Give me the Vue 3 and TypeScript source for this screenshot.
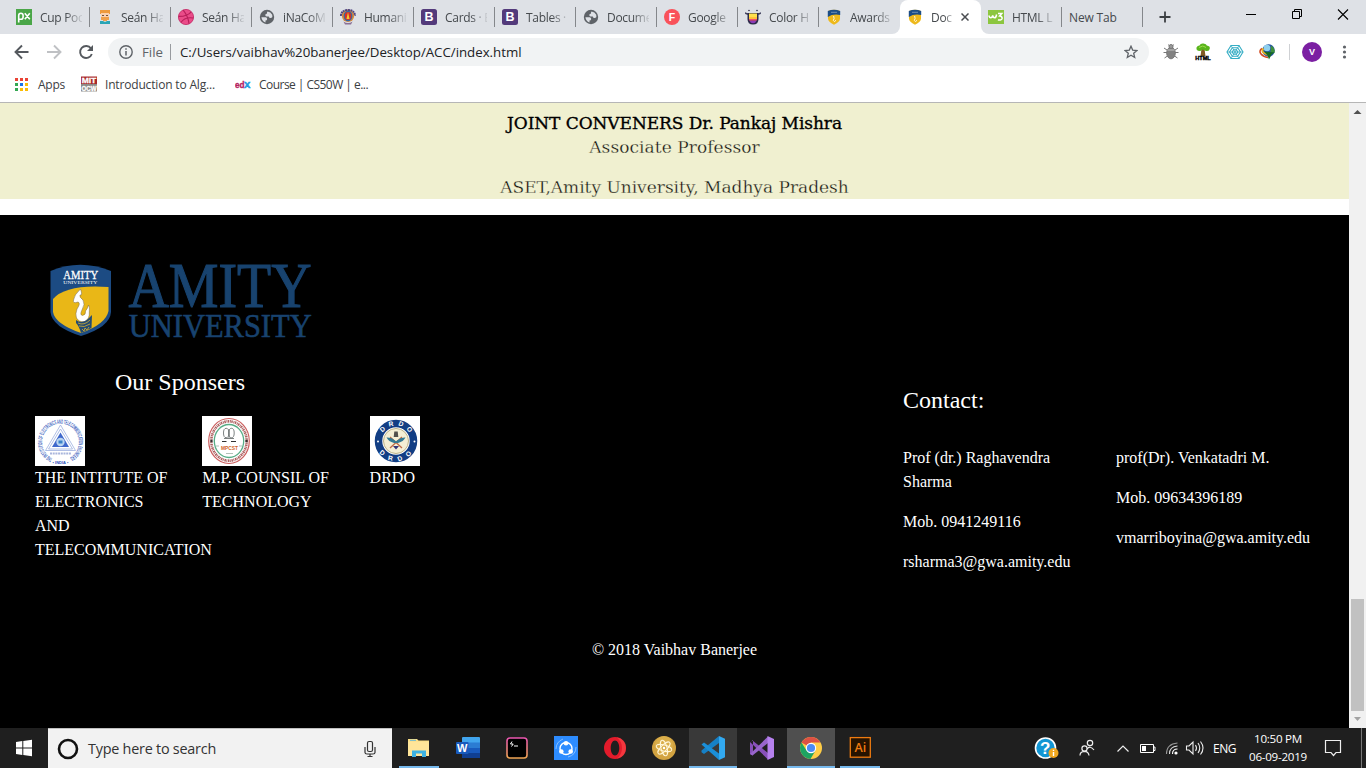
<script setup lang="ts">
interface Tab {
  icon: string
  label: string
  active?: boolean
}

const tabs: Tab[] = [
  { icon: 'px', label: 'Cup Poc' },
  { icon: 'person', label: 'Seán Ha' },
  { icon: 'dribbble', label: 'Seán Ha' },
  { icon: 'globe', label: 'iNaCoM' },
  { icon: 'crest', label: 'Humani' },
  { icon: 'boot', label: 'Cards · E' },
  { icon: 'boot', label: 'Tables ·' },
  { icon: 'globe', label: 'Docume' },
  { icon: 'fonts', label: 'Google' },
  { icon: 'cup', label: 'Color H' },
  { icon: 'shield', label: 'Awards' },
  { icon: 'shield', label: 'Doc', active: true },
  { icon: 'w3', label: 'HTML L' },
  { icon: '', label: 'New Tab' },
]

const appDots = ['#ea4335', '#ea4335', '#ea4335', '#34a853', '#1a73e8', '#fbbc04', '#34a853', '#fbbc04', '#fbbc04']
const apps = ['explorer', 'word', 'terminal', 'share', 'opera', 'atom', 'vscode', 'vs', 'chrome', 'ai']
const running = ['explorer', 'ai']
const raised = ['vscode', 'chrome']

const sponsors = [
  { id: 'iete', name: 'THE INTITUTE OF ELECTRONICS AND TELECOMMUNICATION' },
  { id: 'mpcst', name: 'M.P. COUNSIL OF TECHNOLOGY' },
  { id: 'drdo', name: 'DRDO' },
]

const contacts = [
  ['Prof (dr.) Raghavendra Sharma', 'Mob. 0941249116', 'rsharma3@gwa.amity.edu'],
  ['prof(Dr). Venkatadri M.', 'Mob. 09634396189', 'vmarriboyina@gwa.amity.edu'],
]

// Tracks a single line of text so that it spans the given number of pixels.
const vFit = {
  mounted(el: HTMLElement, binding: { value: number }) {
    const natural = el.getBoundingClientRect().width
    const count = (el.textContent || '').trim().length
    el.style.letterSpacing = `${(binding.value - natural) / count}px`
  },
}
</script>

<template>
  <div class="screen">
    <div class="tabstrip">
      <div class="tabs">
        <div v-for="(t, i) in tabs" :key="i" class="tab" :class="{ active: t.active, before: i === 10, after: i === 12 }">
          <svg v-if="t.icon" class="fav" viewBox="0 0 16 16">
            <template v-if="t.icon === 'px'">
              <rect width="16" height="16" fill="#4aa648" />
              <path d="M2.700 13.500V6.600Q2.700 4.300 4.900 4.300T7.100 6.600V7.900Q7.100 10.200 4.900 10.200H3M8.800 4.300l5 6M13.800 4.300l-5 6" fill="none" stroke="#fff" stroke-width="1.600" />
            </template>
            <template v-else-if="t.icon === 'person'">
              <rect x="3" y="1" width="10" height="4" fill="#ee9a3d" />
              <rect x="4" y="4" width="8" height="7" fill="#fbd0ae" />
              <rect x="5" y="6" width="2" height="1" fill="#6d5140" />
              <rect x="9" y="6" width="2" height="1" fill="#6d5140" />
              <path d="M4 8h8v3H10v1H6V11H4z" fill="#f0a04b" />
              <path d="M3 12h3l2 1 2-1h3v3H3z" fill="#2aa5b5" />
            </template>
            <template v-else-if="t.icon === 'dribbble'">
              <circle cx="8" cy="8" r="7.600" fill="#ea4c89" stroke="#c32361" stroke-width=".8" />
              <path d="M5.200 1.200Q10 7 11 14.600M.6 7.400Q9 7.600 13.200 2.800M3 13.600Q6.500 7.500 15.400 9" fill="none" stroke="#b81f5b" stroke-width="1.100" />
            </template>
            <template v-else-if="t.icon === 'globe'">
              <circle cx="8" cy="8" r="7.200" fill="#5f6368" />
              <path d="M2.400 8.200h4.200q1.600.2 1.600 1.800-.1 1.500-1.700 1.600v1.900Q2.900 12.200 2.400 8.200zM8.600 2.600q3.200.4 4.600 3.200L13.400 8q-1.200 1.500-2.600.9-1-.6-1-1.400H7.600Q6.200 7.200 6.300 6t1.600-1.300q-.1-1.600.7-2.100z" fill="#dee1e6" />
            </template>
            <template v-else-if="t.icon === 'crest'">
              <circle cx="8" cy="6.800" r="6.200" fill="#d98b3b" />
              <path d="M.8 7Q1.500 1 8 1t7.200 6" fill="none" stroke="#4d4380" stroke-width="2" stroke-dasharray="2 .5" />
              <ellipse cx="8" cy="7" rx="3.800" ry="4.600" fill="#d5302b" stroke="#3168a7" stroke-width="1.200" />
              <path d="M8 3l1.500 7h-3z" fill="#f3c733" />
              <path d="M3.500 12.500q4.500 3 9 0l-1.500 3h-6z" fill="#8a7096" />
            </template>
            <template v-else-if="t.icon === 'boot'">
              <rect width="16" height="16" rx="2.500" fill="#533a7b" />
              <text x="8" y="12.300" text-anchor="middle" class="glyph" font-size="12.500" fill="#fff">B</text>
            </template>
            <template v-else-if="t.icon === 'fonts'">
              <circle cx="8" cy="8" r="8" fill="#f9525a" />
              <text x="8" y="11.800" text-anchor="middle" class="glyph" font-size="10.500" fill="#fff">F</text>
            </template>
            <template v-else-if="t.icon === 'cup'">
              <path d="M2.500 4h11v6q0 5.500-5.500 5.500T2.500 10z" fill="#2c2a4a" />
              <rect x="4" y="4.500" width="8" height="4" fill="#ffe14d" />
              <rect x="4" y="8" width="8" height="2" fill="#ffc23d" />
              <path d="M4 10h8l-.4 1.700H4.400z" fill="#f5516c" />
              <path d="M4.500 11.700h7Q10.500 14.300 8 14.300T4.500 11.700z" fill="#8c3bb8" />
              <path d="M.5 3.500q0 1.500 2.500 1.500M15.500 3.500q0 1.500-2.500 1.500" fill="none" stroke="#2c2a4a" stroke-width="1.300" />
              <circle cx="4" cy="1.500" r=".8" fill="#2c2a4a" /><circle cx="12" cy="1.500" r=".8" fill="#2c2a4a" />
            </template>
            <template v-else-if="t.icon === 'shield'">
              <path d="M2 2q6-2.500 12 0v7.500Q14 13 8 15.700 2 13 2 9.500z" fill="#eeb91b" />
              <path d="M1.800 2q6.200-2.700 12.400 0v4Q7 4.500 1.800 8z" fill="#1c4d86" />
              <path d="M5 3.300h6" stroke="#7f9dbf" stroke-width=".8" />
              <path d="M7.600 7l.5 2.500-.8 2 1.400 1.200 1-1.500" fill="none" stroke="#fff8db" />
            </template>
            <template v-else-if="t.icon === 'w3'">
              <rect y="1" width="16" height="14" fill="#8cc63f" />
              <path d="M.8 6.500q.6 2.300 2 2.300T4.700 6.500q.5 2.300 1.900 2.300T8.600 5.500M10 4.500h3.800L11.600 7q2.700.3 2.500 2.400-.4 2.200-4.200 1.500" fill="none" stroke="#fff" stroke-width="1.500" />
            </template>
          </svg>
          <span class="label">{{ t.label }}</span>
          <svg v-if="t.active" class="tabx" viewBox="0 0 8 8"><path d="M.5.5l7 7M7.500.5l-7 7" stroke="#4a4d51" stroke-width="1.500" /></svg>
        </div>
      </div>
      <svg class="plus" viewBox="0 0 12 12"><path d="M6 .5v11M.5 6h11" stroke="#3c4043" stroke-width="1.800" /></svg>
      <svg class="winbtns" viewBox="0 0 138 34">
        <path d="M18 14.500h10" stroke="#000" />
        <path d="M64.500 11.500h7v7h-7zM66.500 11.500v-2h7v7h-2" fill="none" stroke="#000" />
        <path d="M110 9.500l10 10M120 9.500l-10 10" stroke="#000" stroke-width="1.100" />
      </svg>
    </div>

    <div class="toolbar">
      <svg class="nav" viewBox="0 0 100 36">
        <path d="M28.500 18H16M22 11.500L15.500 18l6.500 6.500" fill="none" stroke="#55595e" stroke-width="1.900" />
        <path d="M47 18h12.500M54 11.500L60.500 18 54 24.500" fill="none" stroke="#bfc1c4" stroke-width="1.900" />
        <path d="M91 14.500A6 6 0 1 0 91.800 20" fill="none" stroke="#55595e" stroke-width="1.900" />
        <path d="M93 11v6h-6z" fill="#55595e" />
      </svg>
      <div class="omnibox">
        <svg class="info" viewBox="0 0 14 14"><circle cx="7" cy="7" r="6.200" fill="none" stroke="#5f6368" stroke-width="1.400" /><path d="M7 6v4.500M7 3.300v1.500" stroke="#5f6368" stroke-width="1.500" /></svg>
        <span class="slot file"><span v-fit="21">File</span></span>
        <i class="bar"></i>
        <span class="url"><span v-fit="341.500">C:/Users/vaibhav%20banerjee/Desktop/ACC/index.html</span></span>
        <svg class="star" viewBox="0 0 14 14"><path d="M7 1.200l1.700 3.900 4.200.4-3.200 2.800 1 4.200L7 10.300l-3.700 2.200 1-4.200L1.100 5.500l4.200-.4z" fill="none" stroke="#5f6368" stroke-width="1.300" /></svg>
      </div>
      <svg class="exts" viewBox="0 0 217 36">
        <g stroke="#777" fill="none">
          <path d="M15 14l3 2M29 14l-3 2M14.500 18.500H18M29.500 18.500H26M15.500 24l3-2M28.500 24l-3-2M19.500 10.500L21 13M24.500 10.500L23 13" />
          <ellipse cx="22" cy="19" rx="4.300" ry="5.800" fill="#828282" />
          <circle cx="22" cy="12.500" r="2" fill="#999" />
          <path d="M18.500 16h7" stroke="#c4c4c4" />
        </g>
        <path d="M52.500 15h3l1 7h-5z" fill="#805a22" />
        <path d="M50 17q-3-.5-2.500-3.500 1-2 3-2 1-2.500 4-2t3.300 2q3.500.5 3 3-.5 3-3.500 2.500-1.500-.5-3.500-1.500-1.500 1.500-3.800 1.500z" fill="#59b51c" />
        <path d="M50 13.500q4-3 7 0" stroke="#a0dc49" fill="none" />
        <text x="54" y="25.500" text-anchor="middle" class="glyph" font-size="5.500" textLength="15.500" lengthAdjust="spacingAndGlyphs" stroke="#000" stroke-width=".4">HTML</text>
        <g fill="none" stroke="#35adc4" stroke-width="1.100">
          <path d="M82 11.500h8l4 6.500-4 6.500h-8l-4-6.500z" /><path d="M83.300 13.700h5.400l2.700 4.300-2.700 4.300h-5.400L80.600 18z" /><path d="M84.600 15.800h2.800l1.400 2.200-1.400 2.200h-2.800L83.200 18z" />
          <path d="M78 18h16M82 11.500l8 13M90 11.500l-8 13" stroke-width=".8" />
        </g>
        <circle cx="119.500" cy="16.500" r="6.200" fill="#2858a6" />
        <circle cx="118" cy="14" r="3.300" fill="#8fd0ee" />
        <path d="M122 11.500q4.500 2.500 3.500 7.500l-4-1z" fill="#3f8f3a" />
        <path d="M113 14.500q-3.500 2.500-1 5.500t7 3.500" stroke="#d34b21" stroke-width="1.600" fill="none" />
        <path d="M114.500 14.500q-2.500 2.500.5 4.500t6 2" fill="none" stroke="#e7b523" stroke-width="1.800" />
        <path d="M115 17.500l10.500 1-3 2-2.500 5-1.500-4z" fill="#176b22" />
        <path d="M140.500 10v16" stroke="#cfd1d4" />
        <circle cx="163" cy="18" r="10" fill="#7b1fa2" />
        <text x="163" y="21.200" text-anchor="middle" class="glyph" font-size="9" fill="#fff">V</text>
        <g fill="#5f6368"><circle cx="195.500" cy="13" r="1.600" /><circle cx="195.500" cy="18" r="1.600" /><circle cx="195.500" cy="23" r="1.600" /></g>
      </svg>
    </div>

    <div class="bookmarks">
      <div class="dots"><i v-for="(c, i) in appDots" :key="i" :style="{ background: c }"></i></div>
      <span class="slot b1"><span v-fit="27">Apps</span></span>
      <svg class="fav" viewBox="0 0 16 16">
        <rect y="0.500" width="16" height="7.500" fill="#a8292b" /><rect y="8" width="16" height="7.500" fill="#8d8b88" />
        <text x="8" y="7.200" text-anchor="middle" class="glyph" font-size="7.500" textLength="14.500" lengthAdjust="spacingAndGlyphs" fill="#fff" stroke="#fff" stroke-width=".3">MIT</text>
        <text x="8" y="14.500" text-anchor="middle" class="glyph" font-size="7.500" textLength="15" lengthAdjust="spacingAndGlyphs" fill="#fff" stroke="#fff" stroke-width=".3">OCW</text>
      </svg>
      <span class="slot b2"><span v-fit="110">Introduction to Alg...</span></span>
      <svg class="fav" viewBox="0 0 16 16">
        <text x="0" y="11.500" class="glyph" font-size="9.500" fill="#b5215e" textLength="9.500" lengthAdjust="spacingAndGlyphs" stroke="#b5215e" stroke-width=".4">ed</text>
        <text x="9" y="11.500" class="glyph" font-size="9.500" fill="#1c9be0" stroke="#1c9be0" stroke-width=".5">X</text>
      </svg>
      <span class="slot b3"><span v-fit="109">Course | CS50W | e...</span></span>
    </div>

    <div class="viewport">
      <main class="page">
        <section class="conveners">
          <p><b v-fit="335">JOINT CONVENERS Dr. Pankaj Mishra</b></p>
          <p class="role"><span v-fit="170.500">Associate Professor</span></p>
          <p><span v-fit="348.500">ASET,Amity University, Madhya Pradesh</span></p>
        </section>
        <footer class="footer">
          <div class="columns">
            <div class="left">
              <svg class="amity" viewBox="0 0 300 100">
                <path d="M20.500 21Q50 8.500 81 21V62Q80 77 51 86 22 77 20.500 62z" fill="#1c4b83" />
                <path d="M23 49Q36 34 78.500 37V61Q76 74 51 83 25 74 23 62z" fill="#e9b717" />
                <text x="50.700" y="29" text-anchor="middle" class="serif" font-size="13.500" fill="#fff" stroke="#fff" stroke-width=".3" textLength="35" lengthAdjust="spacingAndGlyphs">AMITY</text>
                <text x="50.300" y="33.800" text-anchor="middle" class="serif" font-size="5" fill="#fff" textLength="34" lengthAdjust="spacingAndGlyphs">UNIVERSITY</text>
                <path d="M50.500 39Q44 45 43.500 50 42.500 54 48 52 51 53 47 59 45 64 46.500 68 49 72.500 54.500 71.500 60 69 59.300 62 60 57 58.500 55 58 58 55.500 61 56 65 52.500 65.500 49.500 65 52 60 55.500 54 53 50 49 47 50 45 53 46 50.500 39z" fill="#fff" stroke="#746442" stroke-width=".5" />
                <path d="M46 70q7 5 14-3l2-2-.5 13-10.500 5q-2-7-5-10z" fill="#244b72" />
                <path d="M48 73q6 3 12-3M49 76q5 2 11-2M52 79l2 2 1-3 2 2 2-3" fill="none" stroke="#d5af31" stroke-width=".8" />
                <text x="98.500" y="57.300" class="serif" font-size="62.500" fill="#18436f" stroke="#18436f" stroke-width="1.100" textLength="183" lengthAdjust="spacingAndGlyphs">AMITY</text>
                <text x="98.700" y="86.500" class="serif" font-size="33" fill="#18436f" stroke="#18436f" stroke-width=".6" textLength="183" lengthAdjust="spacingAndGlyphs">UNIVERSITY</text>
              </svg>
              <h4 class="title">Our Sponsers</h4>
              <div class="sponsors">
                <div v-for="s in sponsors" :key="s.id" class="sponsor">
                  <svg class="seal" viewBox="0 0 50 50">
                    <rect width="50" height="50" fill="#fff" />
                    <template v-if="s.id === 'iete'">
                      <path id="ring-iete" d="M17.500 42.500A18.300 18.300 0 1 1 33.500 42.500" fill="none" />
                      <text class="ring" font-size="6.200" fill="#3c63be"><textPath href="#ring-iete" textLength="96" lengthAdjust="spacingAndGlyphs">THE INSTITUTION OF ELECTRONICS AND TELECOMMUNICATION ENGINEERS</textPath></text>
                      <text x="25.500" y="48" text-anchor="middle" class="ring" font-size="4" fill="#2650b8">• INDIA •</text>
                      <path d="M25.500 9L40.500 34.500H10.500zM25.500 13L37.500 33H13.500z" fill="none" stroke="#9db0df" stroke-width=".8" />
                      <path d="M25.500 16.500l8.500 14.500H17z" fill="#3f68cc" />
                      <circle cx="25.500" cy="26" r="4.200" fill="#b9d5f1" /><path d="M23.500 24.500h4v3h-4z" fill="#3b83c8" />
                      <path d="M15 37.500h21" stroke="#a9b6dc" stroke-width="1.800" stroke-dasharray="2 .7" />
                    </template>
                    <template v-else-if="s.id === 'mpcst'">
                      <ellipse cx="27" cy="25" rx="20.300" ry="22.500" fill="none" stroke="#cb5d5d" stroke-width="1.200" />
                      <ellipse cx="27" cy="25" rx="17.700" ry="19.700" fill="none" stroke="#ad6161" stroke-width="2.600" stroke-dasharray="1.500 .7 .9 .5" />
                      <ellipse cx="27" cy="25" rx="14.700" ry="16.500" fill="none" stroke="#58ad87" stroke-width="1.300" />
                      <g fill="none" stroke="#6e7474" stroke-width=".9"><ellipse cx="24.200" cy="17" rx="2.700" ry="4.700" /><ellipse cx="29.500" cy="17" rx="2.700" ry="4.700" /><path d="M27 13v9M22 22.500h10" /></g>
                      <path d="M20 25.500h4.500M29 25.500h5" stroke="#333" />
                      <text x="27.500" y="33.500" text-anchor="middle" class="ring" font-size="5.800" fill="#d16327" textLength="17" lengthAdjust="spacingAndGlyphs">MPCST</text>
                      <path d="M14 30h3M37 30h3M24 37.500h7" stroke="#91a69a" stroke-width=".7" />
                      <path d="M8.500 25h2M43.500 25h2" stroke="#333" stroke-width="2.500" />
                    </template>
                    <template v-else>
                      <circle cx="26" cy="25" r="17.500" fill="#fff" stroke="#123e84" stroke-width="7.500" />
                      <circle cx="26" cy="25" r="12.500" fill="#f3efd5" stroke="#b5aa7d" stroke-width=".9" />
                      <path id="ring-top" d="M10.500 25A15.500 15.500 0 0 1 41.500 25" fill="none" />
                      <path id="ring-bottom" d="M6 25A20 20 0 0 0 46 25" fill="none" />
                      <text class="ring" font-size="6.600" fill="#fff" letter-spacing="4" text-anchor="middle"><textPath href="#ring-top" startOffset="54%">DRDO</textPath></text>
                      <text class="ring" font-size="6.600" fill="#fff" letter-spacing="6" text-anchor="middle"><textPath href="#ring-bottom" startOffset="54%">DRDO</textPath></text>
                      <circle cx="8" cy="25.500" r="1" fill="#fff" /><circle cx="44.500" cy="25.500" r="1" fill="#fff" />
                      <path d="M20 32l12-11M32 32L20 21" stroke="#bd6a47" stroke-width="1.300" />
                      <path d="M16.500 21.500q5-.5 8.500 3l1 1 1-1q4-3.500 8.500-3-2 4-7.500 5.500h-4q-5.500-1.500-7.500-5.500z" fill="#327a93" />
                      <path d="M24.300 15.500h3.400l.6 5.500h-4.600z" fill="#51514d" /><path d="M23 30h6l-3 3.500z" fill="#353377" />
                    </template>
                  </svg>
                  <div class="name">{{ s.name }}</div>
                </div>
              </div>
            </div>
            <div class="right">
              <h4 class="title">Contact:</h4>
              <div class="contacts">
                <div v-for="(c, i) in contacts" :key="i" class="contact"><p v-for="line in c" :key="line">{{ line }}</p></div>
              </div>
            </div>
          </div>
          <p class="copy">© 2018 Vaibhav Banerjee</p>
        </footer>
      </main>
      <div class="scroll">
        <svg viewBox="0 0 17 17"><path d="M4.500 11l4-4 4 4z" fill="#505050" /></svg>
        <div class="thumb"></div>
        <svg viewBox="0 0 17 17"><path d="M5 6h7L8.500 10z" fill="#a3a3a3" /></svg>
      </div>
    </div>

    <div class="taskbar">
      <svg class="start" viewBox="0 0 48 40"><path d="M16 14l6.300-1v6.500H16zM23.300 12.900L32 11.700v7.800h-8.700zM16 20.500h6.300V27L16 26.100zM23.300 20.500H32v7.800l-8.700-1.200z" fill="#fff" /></svg>
      <div class="search">
        <svg class="cortana" viewBox="0 0 22 22"><circle cx="11" cy="11" r="9" fill="none" stroke="#111" stroke-width="2.600" /></svg>
        <span class="hint"><span v-fit="128">Type here to search</span></span>
        <svg class="mic" viewBox="0 0 12 18"><rect x="3.500" y="1.500" width="5" height="10" rx="1.500" fill="none" stroke="#333" stroke-width="1.200" /><path d="M1 7v5.500q0 1.500 2 1.500h6q2 0 2-1.500V7M6 14v3M3.500 16.500h5" fill="none" stroke="#333" stroke-width="1.200" /></svg>
      </div>
      <div class="apps">
        <div v-for="a in apps" :key="a" class="app" :class="[a, { running: running.includes(a), raised: raised.includes(a) }]">
          <svg viewBox="0 0 24 24">
            <template v-if="a === 'explorer'">
              <path d="M1 3h9l1.500 1.500H22V20H1z" fill="#fbdf86" /><path d="M1 5.500h21V20H1z" fill="#ffe599" /><path d="M3 4.300h6" stroke="#66b9d9" /><path d="M5 21v-6.500h14V21h-4v-3.500H9V21z" fill="#3db2e2" />
            </template>
            <template v-else-if="a === 'word'">
              <rect x="6" y="1" width="18" height="21" rx="1" fill="#41a5ee" /><rect x="6" y="6.500" width="18" height="5.500" fill="#2b7cd3" /><rect x="6" y="12" width="18" height="5" fill="#185abd" /><rect x="6" y="17" width="18" height="5" fill="#103f91" />
              <rect x="0" y="6" width="12.500" height="12" rx="1" fill="#185abd" /><text x="6.200" y="16" text-anchor="middle" class="glyph" font-size="11" fill="#fff">W</text>
            </template>
            <template v-else-if="a === 'terminal'">
              <defs><linearGradient id="term" x1="0" y1="0" x2="0" y2="1"><stop stop-color="#e955b0" /><stop offset="1" stop-color="#efa552" /></linearGradient></defs>
              <rect x="2" y="2" width="20" height="20" rx="3" fill="#000" stroke="url(#term)" stroke-width="1.600" />
              <path d="M7 5.500L5.500 8h2.700L6.500 10.500M9 10h4" fill="none" stroke="#fff" stroke-width="1" />
            </template>
            <template v-else-if="a === 'share'">
              <rect width="24" height="24" fill="#2d8cff" /><circle cx="12" cy="12.500" r="6" fill="none" stroke="#fff" stroke-width="1.400" />
              <g fill="#fff"><circle cx="12" cy="7.300" r="2.300" /><circle cx="7.300" cy="15.500" r="2.300" /><circle cx="16.700" cy="15.500" r="2.300" /></g>
              <path d="M2 13Q2 6 9 3M22 11q0 8-8 10" fill="none" stroke="#8fc4ff" stroke-width=".9" />
            </template>
            <template v-else-if="a === 'opera'">
              <path d="M12 1a11 11 0 1 0 0 22 11 11 0 1 0 0-22zm0 3.500c2.500 0 4.300 3.200 4.300 7.500s-1.800 7.500-4.300 7.500S7.700 16.300 7.700 12 9.500 4.500 12 4.500z" fill="#e31b2b" fill-rule="evenodd" /><path d="M13.500 1.200Q23 3 23 12t-9.500 10.800Q19 19 19 12t-5.500-10.800z" fill="#ff4b4b" opacity=".6" />
            </template>
            <template v-else-if="a === 'atom'">
              <circle cx="12" cy="12" r="12" fill="#d2a341" /><circle cx="12" cy="9" r="9" fill="#e1b954" opacity=".5" /><g fill="none" stroke="#fff6d8" stroke-width="1"><ellipse cx="12" cy="12" rx="3" ry="8" transform="rotate(-15 12 12)" /><ellipse cx="12" cy="12" rx="3" ry="8" transform="rotate(45 12 12)" /><ellipse cx="12" cy="12" rx="3" ry="8" transform="rotate(105 12 12)" /></g><circle cx="12" cy="12" r="1.200" fill="#fff" />
            </template>
            <template v-else-if="a === 'vscode'">
              <path d="M18 0v7L3 18 .5 16.300V14.500z" fill="#1681c7" /><path d="M.5 8.500L3 6.500 18 17.500V24z" fill="#1b8fd8" /><path d="M18 0l6 2.700v18.600L18 24z" fill="#32a9f0" />
            </template>
            <template v-else-if="a === 'vs'">
              <path d="M0 6l2.500-1.500L18 17v6.500zM0 6v12l3 1.500V4.500z" fill="#8750ba" /><path d="M18 .5V7L2.500 19.500 0 18z" fill="#9865cb" /><path d="M17.500 0L24 3v18l-6.500 3z" fill="#b681ee" />
            </template>
            <template v-else-if="a === 'chrome'">
              <circle cx="12" cy="12" r="11" fill="#ffcd46" /><path d="M12 12L2.500 6.500A11 11 0 0 1 21.500 6.500H12z" fill="#dd5144" /><path d="M2.500 6.500A11 11 0 0 0 11.500 23l5-8.500-9 0z" fill="#1da462" /><circle cx="12" cy="12" r="5.200" fill="#fff" /><circle cx="12" cy="12" r="4.100" fill="#4c8bf5" />
            </template>
            <template v-else>
              <rect x="2.300" y="1.600" width="20" height="19.600" fill="#261300" stroke="#ee7b10" stroke-width="1.300" /><text x="12.300" y="15.500" text-anchor="middle" class="ai-mark" font-size="12.500" fill="#ee7b10">Ai</text>
            </template>
          </svg>
        </div>
      </div>
      <svg class="tray" viewBox="0 0 200 40">
        <circle cx="35.500" cy="20" r="10" fill="#1296d4" stroke="#fff" stroke-width="1.600" />
        <text x="35.300" y="26" text-anchor="middle" class="glyph" font-size="17" fill="#fff">?</text>
        <circle cx="43.500" cy="25" r="5" fill="#f0a71f" /><path d="M43.500 24v4M43.500 21.700v1.300" stroke="#fff" stroke-width="1.400" />
        <g fill="none" stroke="#eee" stroke-width="1.200"><circle cx="80" cy="15" r="2.700" /><path d="M77 21q3-4 7 1" /><circle cx="74.500" cy="20.500" r="2.600" /><path d="M70 27.500q0-4 4.500-4.200 4 0 4.500 4.200" /></g>
        <path d="M107.500 23.500l5.500-5.500 5.500 5.500" fill="none" stroke="#eee" stroke-width="1.200" />
        <path d="M130.500 16.500h13v8h-13zM143.500 19h1.500v3.500h-1.500" fill="none" stroke="#fff" /><rect x="132" y="18" width="4" height="5" fill="#fff" />
        <g fill="none" stroke="#999" stroke-width="1.100"><path d="M156.500 26q0-10 11-11" /><path d="M159.500 26q0-7.500 8-8" stroke="#ddd" /><path d="M162.500 26q0-5 5-5" stroke="#fff" /></g><circle cx="166" cy="25" r="1.600" fill="#fff" />
        <g fill="none" stroke="#eee" stroke-width="1.100"><path d="M176.500 18H179l4-4v12l-4-4h-2.500zM185.500 17q2 3 0 6M188 15q3.500 5 0 10M190.500 13.500q5 6.500 0 13" /></g>
      </svg>
      <span class="lang"><span v-fit="23">ENG</span></span>
      <div class="clock"><span v-fit="48">10:50 PM</span><span v-fit="58">06-09-2019</span></div>
      <svg class="note" viewBox="0 0 18 18"><path d="M1.500 1.500h15v12H12L9.500 16.500 7 13.500H1.500z" fill="none" stroke="#eee" stroke-width="1.200" /></svg>
      <i class="peek"></i>
    </div>
  </div>
</template>

<style>
html, body { margin: 0; overflow: hidden; }
</style>

<style scoped>
.screen { width: 1366px; height: 768px; display: flex; flex-direction: column; overflow: hidden; background: #fff; font-family: "Open Sans", "Noto Sans", sans-serif; }
svg { display: block; flex: none; }
.glyph { font-family: "Liberation Sans", Arial, sans-serif; font-weight: 700; }
.ai-mark { font-family: "Open Sans", sans-serif; font-weight: 600; }
.serif { font-family: "Liberation Serif", "Times New Roman", serif; }
.ring { font-family: "Liberation Sans", Arial, sans-serif; font-weight: 700; }

.tabstrip { height: 34px; flex: none; display: flex; background: #dee1e6; }
.tabs { display: flex; padding-left: 9px; }
.tab { position: relative; box-sizing: border-box; width: 81px; height: 34px; display: flex; align-items: center; padding-left: 7px; }
.tab::after { content: ""; position: absolute; right: 0; top: 7px; width: 1px; height: 20px; background: #84878b; }
.fav { width: 16px; height: 16px; margin-right: 8px; }
.label { width: 42px; overflow: hidden; white-space: nowrap; font-size: 12px; letter-spacing: -0.3px; color: #45494d; mask-image: linear-gradient(90deg, #000 60%, transparent 106%); }
.tab:last-child .label { width: 60px; letter-spacing: -0.15px; mask-image: none; }
.tab.active { background: #fff; border-radius: 8px 8px 0 0; }
.tab.active .label { width: 22px; mask-image: linear-gradient(90deg, #000 60%, transparent 110%); }
.tab.active::after, .tab.before::after { display: none; }
.tab.before { border-radius: 0 0 8px 0; background: #dee1e6; box-shadow: 4px 4px 0 #fff; clip-path: inset(0); }
.tab.after { border-radius: 0 0 0 8px; background: #dee1e6; box-shadow: -4px 4px 0 #fff; clip-path: inset(0); }
.tabx { width: 8px; height: 8px; margin-left: 8px; }
.plus { width: 12px; height: 12px; margin: 11px 0 0 16px; }
.winbtns { width: 138px; height: 34px; margin-left: auto; }

.toolbar { height: 36px; flex: none; display: flex; align-items: center; }
.nav { width: 100px; height: 36px; }
.omnibox { box-sizing: border-box; width: 1041px; height: 28px; margin-left: 8px; border-radius: 14px; background: #f1f3f4; display: flex; align-items: center; padding: 0 11px; font-size: 13.3px; color: #202124; white-space: nowrap; }
.info { width: 14px; height: 14px; margin-right: 9px; }
.slot { display: block; white-space: nowrap; }
.file { width: 28px; color: #5f6368; }
.bar { width: 1px; height: 16px; background: #989b9f; margin-right: 9px; }
.url { flex: 1; }
.star { width: 14px; height: 14px; }
.exts { width: 217px; height: 36px; }

.bookmarks { height: 32px; flex: none; display: flex; align-items: center; padding: 0 0 4px 15px; box-sizing: border-box; font-size: 12px; color: #3c4043; }
.dots { display: grid; grid-template-columns: repeat(3, 3px); gap: 2px; width: 13px; }
.dots i { height: 3px; }
.b1 { margin-left: 10px; width: 43px; }
.b2 { width: 130px; }
.slot + .fav { margin-right: 8px; }

.viewport { flex: none; height: 626px; box-sizing: border-box; border-top: 1px solid #b6b6b6; display: flex; }
.page { width: 1349px; display: flex; flex-direction: column; overflow: hidden; }
.conveners { height: 96px; flex: none; box-sizing: border-box; padding-top: 8px; margin-bottom: 16px; background: #f0f0d0; text-align: center; font: 17px/24px "DejaVu Serif", serif; color: #111; -webkit-text-stroke: 0.3px #f0f0d0; }
.conveners p { margin: 0; white-space: nowrap; }
.conveners b { font-weight: 400; color: #000; -webkit-text-stroke: 0.35px #000; }
.conveners .role { margin-bottom: 16px; }

.footer { flex: 1; background: #000; color: #fff; font: 16px/24px "Liberation Serif", "Times New Roman", serif; }
.columns { display: flex; height: 423px; }
.left { width: 903px; flex: none; padding-top: 35px; box-sizing: border-box; }
.amity { width: 300px; height: 100px; margin-left: 30px; }
.title { margin: 0; font-size: 24px; line-height: 29px; font-weight: 400; }
.left .title { margin: 18px 0 19px 115px; }
.sponsors { display: flex; padding-left: 35px; gap: 30px; }
.sponsor { width: 137.3px; }
.seal { width: 50px; height: 50px; }
.right { padding-top: 171px; }
.contacts { display: flex; gap: 30px; margin-top: 31px; }
.contact { width: 183px; }
.contact p { margin: 0 0 16px; }
.copy { margin: 0; text-align: center; }

.scroll { width: 17px; display: flex; flex-direction: column; align-items: center; background: #f1f1f1; }
.scroll svg { width: 17px; height: 17px; }
.thumb { width: 13px; height: 112px; margin-top: auto; background: #c1c1c1; }

.taskbar { height: 40px; flex: none; display: flex; align-items: center; background: #1f1f1f; color: #fff; }
.start { width: 48px; height: 40px; }
.search { box-sizing: border-box; width: 344px; height: 40px; display: flex; align-items: center; padding-left: 9px; background: #f2f2f2; border-top: 1px solid #c0c0c0; color: #333; font-size: 14.4px; }
.cortana { width: 22px; height: 22px; }
.hint { width: 276px; margin-left: 9px; white-space: nowrap; }
.mic { width: 12px; height: 18px; }
.apps { display: flex; gap: 1px; margin-left: 3px; }
.app { box-sizing: border-box; width: 48px; height: 40px; padding: 8px 12px 0; }
.app svg { width: 24px; height: 24px; }
.raised { background: #393939; box-shadow: inset 0 -2px #76b9ed; }
.raised.chrome { background: #4f4f4f; }
.running { background: linear-gradient(#76b9ed, #76b9ed) center bottom / 40px 2px no-repeat; }
.tray { width: 200px; height: 40px; margin-left: 126px; }
.lang { width: 36px; margin-left: 3px; font-size: 12px; white-space: nowrap; }
.clock { width: 58px; display: flex; flex-direction: column; align-items: center; font-size: 11.6px; line-height: 18px; white-space: nowrap; }
.note { width: 18px; height: 18px; margin-left: 17px; }
.peek { width: 1px; height: 40px; margin-left: 19px; background: #777; }
</style>
